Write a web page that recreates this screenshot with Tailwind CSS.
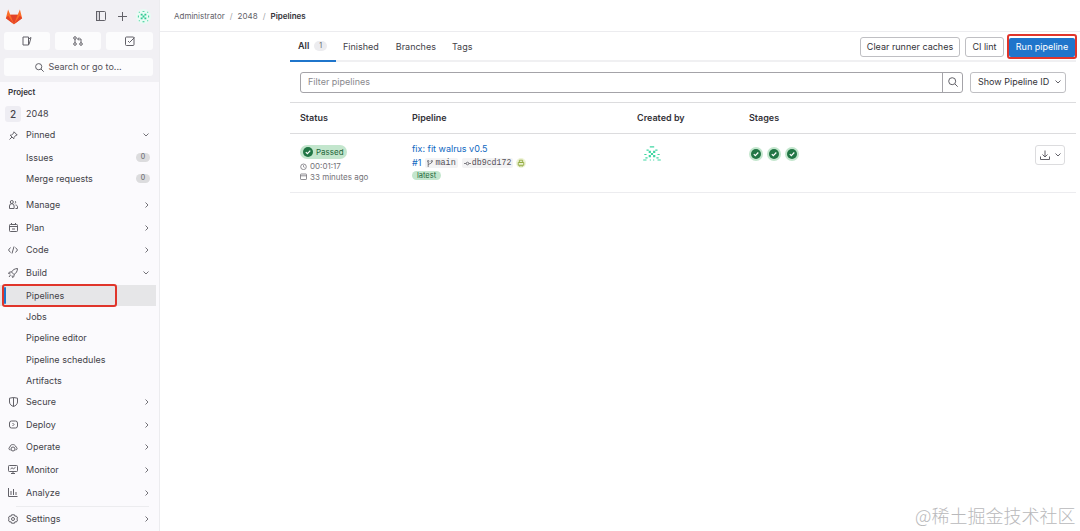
<!DOCTYPE html>
<html lang="en">
<head>
    <meta charset="UTF-8">
    <title>Pipelines - 2048</title>
    <script src="https://cdn.jsdelivr.net/npm/@tailwindcss/browser@4"></script>
</head>
<body class="bg-white">
<div class="relative flex w-[1080px] h-[531px] overflow-hidden font-['Inter',sans-serif] text-[9px] text-[#333238]">

    <!-- Sidebar -->
    <aside class="w-[160px] h-full shrink-0 flex flex-col bg-[#fbfafd] border-r border-[#ececef]">
        <div class="bg-[#f1f0f4] h-[82px] pl-1 pr-[6px] shrink-0">
            <div class="h-[32px] flex items-center">
                <svg class="ml-[1px] w-[18px] h-[17px]" viewBox="0 0 24 23"><path d="M12 22 L1 14 L4 2 L7 9 H17 L20 2 L23 14 Z" fill="#fc6d26"/><path d="M12 22 L7 9 H17 Z" fill="#e24329"/><path d="M12 22 L1 14 L4 10 Z" fill="#e24329"/><path d="M12 22 L23 14 L20 10 Z" fill="#e24329"/></svg>
                <svg class="ml-[73px] w-[10px] h-[10px]" viewBox="0 0 10 10" fill="none" stroke="#626168"><rect x=".5" y=".5" width="9" height="9" rx="1"/><rect x=".5" y=".5" width="3" height="9" fill="#d8d7dc"/></svg>
                <svg class="ml-[12px] w-[9px] h-[9px]" viewBox="0 0 9 9" stroke="#626168"><path d="M4.500 0v9M0 4.500h9"/></svg>
                <svg class="ml-[9px] w-[15px] h-[15px]" viewBox="0 0 16 16"><rect width="16" height="16" rx="8" fill="#e9fbf4"/><path d="M5 5h2v2H5zM9 5h2v2H9zM7 7h2v2H7zM5 9h2v2H5zM9 9h2v2H9zM3 3h1v1H3zM12 3h1v1h-1zM3 12h1v1H3zM12 12h1v1h-1zM7 2h2v1H7zM2 7h1v2H2zM13 7h1v2h-1zM7 13h2v1H7z" fill="#2fca92"/></svg>
            </div>
            <div class="flex gap-[5px]">
                <div class="w-[46px] h-[18px] bg-white/80 rounded-[3px] flex items-center justify-center">
                    <svg class="w-[10px] h-[10px]" viewBox="0 0 10 10" fill="none" stroke="#626168"><path d="M1 1h5.500v8H1zM6.500 3L9 1.500 7.500 7 6.500 9"/></svg>
                </div>
                <div class="w-[46px] h-[18px] bg-white/80 rounded-[3px] flex items-center justify-center">
                    <svg class="w-[10px] h-[10px]" viewBox="0 0 10 10" fill="none" stroke="#626168"><circle cx="2" cy="2" r="1.300"/><circle cx="2" cy="8" r="1.300"/><circle cx="8" cy="8" r="1.300"/><path d="M2 3.300v3.400M8 6.700V3H5M6 1.500 4.500 3 6 4.500"/></svg>
                </div>
                <div class="w-[47px] h-[18px] bg-white/80 rounded-[3px] flex items-center justify-center">
                    <svg class="w-[10px] h-[10px]" viewBox="0 0 10 10" fill="none" stroke="#626168"><rect x=".5" y="1" width="8.500" height="8.500" rx="1"/><path d="M3 5l1.500 1.500L9.500 1.500"/></svg>
                </div>
            </div>
            <div class="mt-2 h-[18px] bg-white/80 rounded-[3px] flex items-center justify-center gap-1 text-[9px] text-[#535158]">
                <svg class="w-[9px] h-[9px]" viewBox="0 0 9 9" fill="none" stroke="#626168"><circle cx="3.700" cy="3.700" r="3.100"/><path d="M6 6l2.700 2.700"/></svg>
                Search or go to...
            </div>
        </div>

        <div class="pt-[2px] flex flex-col text-[9px] text-[#434248]">
            <div class="h-[13px] mt-[1px] pl-2 flex items-center font-semibold text-[8px] text-[#333238]">Project</div>
            <div class="h-[20px] mt-[6px] pl-[5px] flex items-center gap-[5px]">
                <span class="w-[16px] h-[16px] rounded-[3px] bg-[#eeedf3] flex items-center justify-center text-[10px] font-medium">2</span>
                <span>2048</span>
            </div>
            <div class="h-[22px] pl-[9px] pr-[10px] flex items-center">
                <svg class="w-[9px] h-[9px]" viewBox="0 0 9 9" fill="none" stroke="#626168"><path d="M5 .8 8.200 4 6.800 4.300 5 6.500 4.800 7.800 1.200 4.200 2.500 4 4.700 2.200zM3 6 .5 8.500"/></svg>
                <span class="ml-[8px]">Pinned</span>
                <svg class="ml-auto w-[6px] h-[4px]" viewBox="0 0 6 4" fill="none" stroke="#737278"><path d="M.5 .5 3 3 5.500 .5"/></svg>
            </div>
            <div class="h-[21px] mt-[1px] pl-[26px] pr-[9px] flex items-center justify-between">Issues<span class="w-[14px] h-[9px] rounded-full bg-[#dcdcde] text-[7px] text-[#626168] flex items-center justify-center">0</span></div>
            <div class="h-[21px] pl-[26px] pr-[9px] flex items-center justify-between">Merge requests<span class="w-[14px] h-[9px] rounded-full bg-[#dcdcde] text-[7px] text-[#626168] flex items-center justify-center">0</span></div>

            <div class="h-[23px] mt-[4px] pl-[9px] pr-[10px] flex items-center">
                <svg class="w-[9px] h-[9px]" viewBox="0 0 9 9" fill="none" stroke="#626168"><circle cx="2.800" cy="2" r="1.500"/><path d="M.5 8.500V6a2.300 2.300 0 0 1 4.600 0v2.500zM6 1a1.500 1.500 0 0 1 0 2.500M6.500 5c1.300 0 2 .8 2 2v1.500H6.500"/></svg>
                <span class="ml-[8px]">Manage</span>
                <svg class="ml-auto w-[4px] h-[6px]" viewBox="0 0 4 6" fill="none" stroke="#737278"><path d="M.5 .5 3 3 .5 5.500"/></svg>
            </div>
            <div class="h-[23px] pl-[9px] pr-[10px] flex items-center">
                <svg class="w-[9px] h-[9px]" viewBox="0 0 9 9" fill="none" stroke="#626168"><rect x=".5" y="1.500" width="8" height="7" rx=".8"/><path d="M.5 3.500h8M2.500 0v2M6.500 0v2M3 6h3"/></svg>
                <span class="ml-[8px]">Plan</span>
                <svg class="ml-auto w-[4px] h-[6px]" viewBox="0 0 4 6" fill="none" stroke="#737278"><path d="M.5 .5 3 3 .5 5.500"/></svg>
            </div>
            <div class="h-[22px] pl-[8px] pr-[10px] flex items-center">
                <svg class="w-[10px] h-[8px]" viewBox="0 0 10 8" fill="none" stroke="#626168"><path d="M2.500 1.500 .5 4l2 2.500M7.500 1.500 9.500 4l-2 2.500M6 .5 4 7.500"/></svg>
                <span class="ml-[8px]">Code</span>
                <svg class="ml-auto w-[4px] h-[6px]" viewBox="0 0 4 6" fill="none" stroke="#737278"><path d="M.5 .5 3 3 .5 5.500"/></svg>
            </div>
            <div class="h-[23px] pl-[8px] pr-[10px] flex items-center">
                <svg class="w-[10px] h-[10px]" viewBox="0 0 10 10" fill="none" stroke="#626168"><path d="M9.500 .5C7 .5 4.500 2 3.500 4L6 6.500C8 5.500 9.500 3 9.500 .5zM3.500 4H1.500L.5 5.500 2.500 6M6 6.500V8.500L4.500 9.500 4 7.500M2.500 7 1 9"/></svg>
                <span class="ml-[8px]">Build</span>
                <svg class="ml-auto w-[6px] h-[4px]" viewBox="0 0 6 4" fill="none" stroke="#737278"><path d="M.5 .5 3 3 5.500 .5"/></svg>
            </div>
            <div class="relative h-[21px] mt-[1px] mr-[3px] pl-[26px] flex items-center bg-[#e6e6e8]">
                <span class="absolute left-[4px] top-[2px] bottom-[2px] w-[2px] bg-[#1f75cb] rounded-full"></span>Pipelines
            </div>
            <div class="h-[21px] pl-[26px] flex items-center">Jobs</div>
            <div class="h-[22px] pl-[26px] flex items-center">Pipeline editor</div>
            <div class="h-[21px] pl-[26px] flex items-center">Pipeline schedules</div>
            <div class="h-[21px] pl-[26px] flex items-center">Artifacts</div>

            <div class="h-[22px] pl-[9px] pr-[10px] flex items-center">
                <svg class="w-[9px] h-[10px]" viewBox="0 0 9 10" fill="none" stroke="#626168"><path d="M.5 1.200 4.500 .5l4 .7V5c0 2.300-2 3.800-4 4.500C2.500 8.800.5 7.300.5 5zM4.500 .5v9"/></svg>
                <span class="ml-[8px]">Secure</span>
                <svg class="ml-auto w-[4px] h-[6px]" viewBox="0 0 4 6" fill="none" stroke="#737278"><path d="M.5 .5 3 3 .5 5.500"/></svg>
            </div>
            <div class="h-[23px] pl-[9px] pr-[10px] flex items-center">
                <svg class="w-[9px] h-[9px]" viewBox="0 0 9 9" fill="none" stroke="#626168"><rect x=".5" y="1" width="8" height="7" rx="2"/><path d="M3.500 3 5 4.500 3.500 6"/></svg>
                <span class="ml-[8px]">Deploy</span>
                <svg class="ml-auto w-[4px] h-[6px]" viewBox="0 0 4 6" fill="none" stroke="#737278"><path d="M.5 .5 3 3 .5 5.500"/></svg>
            </div>
            <div class="h-[22px] pl-[8px] pr-[10px] flex items-center">
                <svg class="w-[10px] h-[9px]" viewBox="0 0 10 9" fill="none" stroke="#626168"><path d="M2.500 7C.5 7 .5 4.500 2 4c0-3 5-3.500 6 0 1.500.5 1.500 3-.5 3"/><circle cx="5" cy="6" r="2"/></svg>
                <span class="ml-[8px]">Operate</span>
                <svg class="ml-auto w-[4px] h-[6px]" viewBox="0 0 4 6" fill="none" stroke="#737278"><path d="M.5 .5 3 3 .5 5.500"/></svg>
            </div>
            <div class="h-[23px] pl-[8px] pr-[10px] flex items-center">
                <svg class="w-[10px] h-[9px]" viewBox="0 0 10 9" fill="none" stroke="#626168"><rect x=".5" y=".5" width="9" height="6" rx=".8"/><path d="M3 8.500h4M5 6.500v2M2.500 4 4 2.800l1.500 1 2-1.500"/></svg>
                <span class="ml-[8px]">Monitor</span>
                <svg class="ml-auto w-[4px] h-[6px]" viewBox="0 0 4 6" fill="none" stroke="#737278"><path d="M.5 .5 3 3 .5 5.500"/></svg>
            </div>
            <div class="h-[23px] pl-[8px] pr-[10px] flex items-center">
                <svg class="w-[10px] h-[9px]" viewBox="0 0 10 9" fill="none" stroke="#626168"><path d="M.5 0v8.500h9M3 3v4M5.500 1v6M8 4v3"/></svg>
                <span class="ml-[8px]">Analyze</span>
                <svg class="ml-auto w-[4px] h-[6px]" viewBox="0 0 4 6" fill="none" stroke="#737278"><path d="M.5 .5 3 3 .5 5.500"/></svg>
            </div>
            <div class="mt-[2px] ml-[16px] mr-[10px] h-px bg-[#ececef]"></div>
            <div class="h-[24px] pl-[8px] pr-[10px] flex items-center">
                <svg class="w-[10px] h-[10px]" viewBox="0 0 10 10" fill="none" stroke="#626168"><path d="M3.500 .8h3l.4 1.400 1.500-.2 1.200 2-.9 1 .9 1-1.200 2-1.500-.2-.4 1.400h-3L3.100 7.800l-1.500.2-1.200-2 .9-1-.9-1 1.200-2 1.500.2z"/><circle cx="5" cy="5" r="1.500"/></svg>
                <span class="ml-[8px]">Settings</span>
                <svg class="ml-auto w-[4px] h-[6px]" viewBox="0 0 4 6" fill="none" stroke="#737278"><path d="M.5 .5 3 3 .5 5.500"/></svg>
            </div>
        </div>
    </aside>

    <!-- Main -->
    <main class="flex-1 min-w-0 flex flex-col">
        <div class="h-[32px] shrink-0 border-b border-[#ececef] pl-[14px] flex items-center gap-[5px] text-[8px] text-[#626168]">
            <span>Administrator</span><span class="text-[#a4a3a8]">/</span><span>2048</span><span class="text-[#a4a3a8]">/</span><span class="font-semibold text-[#333238]">Pipelines</span>
        </div>
        <div class="ml-[130px] mr-[4px] flex flex-col">
            <div class="h-[30px] flex items-start justify-between border-b-2 border-[#f0f0f2]">
                <div class="flex h-[30px] text-[9px] text-[#434248]">
                    <div class="w-[46px] h-[30px] flex items-center pl-[8px] gap-[5px] border-b-2 border-[#1f75cb] font-semibold text-[#333238]">All<span class="w-[13px] h-[10px] rounded-full bg-[#ececef] flex items-center justify-center text-[7px] font-normal text-[#626168]">1</span></div>
                    <div class="h-[30px] flex items-center pl-[7px]">Finished</div>
                    <div class="h-[30px] flex items-center pl-[17px]">Branches</div>
                    <div class="h-[30px] flex items-center pl-[16px]">Tags</div>
                </div>
                <div class="flex items-center gap-[5px] h-[20px] mt-[5px] text-[9px]">
                    <div class="w-[100px] h-[20px] border border-[#bfbfc3] rounded-[3px] flex items-center justify-center">Clear runner caches</div>
                    <div class="w-[39px] h-[20px] border border-[#bfbfc3] rounded-[3px] flex items-center justify-center">CI lint</div>
                    <div class="w-[66px] h-[19px] mr-[1px] bg-[#1f75cb] rounded-[2px] text-white flex items-center justify-center">Run pipeline</div>
                </div>
            </div>
            <div class="h-[41px] px-[10px] flex items-center gap-[7px] border-b border-[#dcdcde]">
                <div class="flex-1 h-[21px] flex border border-[#a4a3a8] rounded-[3px]">
                    <div class="flex-1 pl-[7px] flex items-center text-[#89888d]">Filter pipelines</div>
                    <div class="w-[20px] border-l border-[#a4a3a8] flex items-center justify-center">
                        <svg class="w-[10px] h-[10px]" viewBox="0 0 10 10" fill="none" stroke="#626168"><circle cx="4.200" cy="4.200" r="3.500"/><path d="M7 7l2.700 2.700"/></svg>
                    </div>
                </div>
                <div class="w-[96px] h-[21px] border border-[#bfbfc3] rounded-[3px] flex items-center pl-[7px] pr-[4px] justify-between">Show Pipeline ID
                    <svg class="w-[6px] h-[4px]" viewBox="0 0 6 4" fill="none" stroke="#626168"><path d="M.5 .5 3 3 5.500 .5"/></svg>
                </div>
            </div>
            <div class="h-[31px] grid grid-cols-[112px_225px_112px_1fr] pl-[10px] items-center border-b border-[#dcdcde] font-semibold text-[9px] text-[#333238]">
                <span>Status</span><span>Pipeline</span><span>Created by</span><span>Stages</span>
            </div>
            <div class="h-[59px] grid grid-cols-[112px_225px_112px_1fr] pl-[10px] border-b border-[#ececef]">
                <div class="pt-[11px]">
                    <div class="w-[47px] h-[14px] rounded-full bg-[#c3e6cd] text-[8px] text-[#24663b] flex items-center pl-[3px] gap-[3px]">
                        <svg class="w-[10px] h-[10px]" viewBox="0 0 10 10"><circle cx="5" cy="5" r="5" fill="#217645"/><path d="M2.800 5.100 4.400 6.700 7.300 3.600" stroke="#fff" stroke-width="1.200" fill="none"/></svg>
                        Passed
                    </div>
                    <div class="mt-[2px] h-[10px] flex items-center gap-[3px] text-[8px] text-[#737278]">
                        <svg class="w-[7px] h-[7px]" viewBox="0 0 7 7" fill="none" stroke="#737278" stroke-width=".8"><circle cx="3.500" cy="3.800" r="2.800"/><path d="M3.500 2.200v1.600l1 .6"/></svg>00:01:17
                    </div>
                    <div class="h-[11px] flex items-center gap-[3px] text-[8px] text-[#737278]">
                        <svg class="w-[7px] h-[7px]" viewBox="0 0 7 7" fill="none" stroke="#737278" stroke-width=".8"><rect x=".5" y="1" width="6" height="5.500" rx=".6"/><path d="M.5 2.800h6"/></svg>33 minutes ago
                    </div>
                </div>
                <div class="pt-[8px]">
                    <div class="h-[14px] flex items-center text-[9px] text-[#1068bf]">fix: fit walrus v0.5</div>
                    <div class="h-[12px] mt-[1px] flex items-center gap-[4px]">
                        <span class="text-[9px] text-[#1068bf]">#1</span>
                        <span class="h-[10px] px-[2px] bg-[#f3f3f4] rounded-[2px] flex items-center gap-[2px] font-['Liberation_Mono',monospace] text-[8.500px] text-[#535158]">
                            <svg class="w-[6px] h-[7px]" viewBox="0 0 6 7" fill="none" stroke="#626168" stroke-width=".8"><circle cx="1.200" cy="1.200" r=".8"/><circle cx="4.800" cy="1.200" r=".8"/><path d="M1.200 2v5M4.800 2c0 2-3.600 1.500-3.600 3"/></svg>main
                        </span>
                        <span class="h-[10px] px-[2px] bg-[#f3f3f4] rounded-[2px] flex items-center gap-[1px] font-['Liberation_Mono',monospace] text-[8.250px] text-[#535158]">
                            <svg class="w-[7px] h-[5px]" viewBox="0 0 7 5" fill="none" stroke="#626168" stroke-width=".8"><circle cx="3.500" cy="2.500" r="1.300"/><path d="M0 2.500h2.200M4.800 2.500H7"/></svg>db9cd172
                        </span>
                        <svg class="w-[10px] h-[10px] -ml-[1px]" viewBox="0 0 9 9"><circle cx="4.500" cy="4.500" r="4.500" fill="#eef3d6"/><path d="M2 4h5v2.500H2zM3 2h3v2H3zM3.500 6.500v1.500M5.500 6.500v1.500" fill="none" stroke="#8fa83c" stroke-width=".8"/></svg>
                    </div>
                    <div class="mt-[2px] w-[29px] h-[9px] rounded-full bg-[#c3e6cd] text-[7.500px] text-[#24663b] flex items-center justify-center">latest</div>
                </div>
                <div class="pt-[9px] pl-[4px]">
                    <svg class="w-[22px] h-[22px]" viewBox="0 0 20 20"><path d="M8 3h4v1H8zM5 6h2v1H5zM13 6h2v1h-2zM7 7h2v2H7zM11 7h2v2h-2zM9 9h2v2H9zM7 11h2v2H7zM11 11h2v2h-2zM3 10h2v1H3zM15 10h2v1h-2zM4 13h2v1H4zM14 13h2v1h-2zM2 15h3v1H2zM15 15h3v1h-3zM8 15h1v1H8zM11 15h1v1h-1z" fill="#3fd6a2"/></svg>
                </div>
                <div class="relative pt-[13px] flex items-start gap-[4px] pr-[11px]">
                    <svg class="w-[14px] h-[14px]" viewBox="0 0 14 14"><circle cx="7" cy="7" r="7" fill="#c3e6cd"/><circle cx="7" cy="7" r="5" fill="#217645"/><path d="M4.800 7.100 6.300 8.600 9.300 5.500" stroke="#fff" stroke-width="1.200" fill="none"/></svg>
                    <svg class="w-[14px] h-[14px]" viewBox="0 0 14 14"><circle cx="7" cy="7" r="7" fill="#c3e6cd"/><circle cx="7" cy="7" r="5" fill="#217645"/><path d="M4.800 7.100 6.300 8.600 9.300 5.500" stroke="#fff" stroke-width="1.200" fill="none"/></svg>
                    <svg class="w-[14px] h-[14px]" viewBox="0 0 14 14"><circle cx="7" cy="7" r="7" fill="#c3e6cd"/><circle cx="7" cy="7" r="5" fill="#217645"/><path d="M4.800 7.100 6.300 8.600 9.300 5.500" stroke="#fff" stroke-width="1.200" fill="none"/></svg>
                    <div class="ml-auto w-[30px] h-[20px] -mt-[2px] border border-[#dcdcde] rounded-[3px] flex items-center justify-center gap-[5px]">
                        <svg class="w-[10px] h-[10px]" viewBox="0 0 10 10" fill="none" stroke="#626168"><path d="M5 .5v6M2.500 4.500 5 7l2.500-2.500M.5 6.500v3h9v-3"/></svg>
                        <svg class="w-[6px] h-[4px]" viewBox="0 0 6 4" fill="none" stroke="#626168"><path d="M.5 .5 3 3 5.500 .5"/></svg>
                    </div>
                </div>
            </div>
        </div>
    </main>

    <!-- Red annotation boxes -->
    <div class="absolute left-[2px] top-[284px] w-[115px] h-[23px] border-2 border-[#e0352b] rounded-[3px]"></div>
    <div class="absolute left-[1007px] top-[34px] w-[70px] h-[25px] border-2 border-[#e0352b] rounded-[3px]"></div>

    <!-- Watermark -->
    <div class="absolute left-[915px] top-[505px] text-[18px] leading-[20px] whitespace-nowrap text-[#b9b9bb] font-['Noto_Sans_CJK_SC',sans-serif] font-light">@稀土掘金技术社区</div>
</div>
</body>
</html>
